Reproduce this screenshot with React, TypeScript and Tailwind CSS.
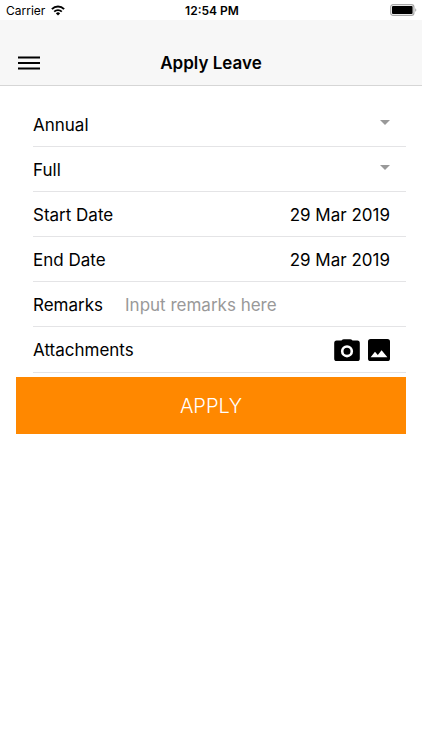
import { useState } from "react";

interface SelectRowProps {
  id: string;
  label: string;
  options: string[];
}

interface DateRowProps {
  id: string;
  label: string;
  initial: string;
}

const StatusBar = () => (
  <div className="grid h-5 grid-cols-3 items-center bg-white pr-1 pl-1.5 text-[12px] leading-4">
    <div className="flex items-center gap-1.5">
      <span className="pt-0.5">Carrier</span>
      <svg width="14" height="11" viewBox="0 0 14 11" fill="none" stroke="#000">
        <path d="M0.9 4.1a8.7 8.7 0 0 1 12.2 0" strokeWidth="2" />
        <path d="M3.2 6.6a5.4 5.4 0 0 1 7.6 0" strokeWidth="1.8" />
        <path d="M7 10.6L4.9 8.4a3 3 0 0 1 4.2 0z" fill="#000" stroke="none" />
      </svg>
    </div>
    <span className="pt-0.5 text-center font-semibold">12:54 PM</span>
    <svg
      className="justify-self-end"
      width="28"
      height="12"
      viewBox="0 0 28 12"
    >
      <rect
        x="0.7"
        y="0.7"
        width="23.2"
        height="10.6"
        rx="2.4"
        fill="#fff"
        stroke="#a8a8a8"
        strokeWidth="1.2"
      />
      <rect x="2" y="2" width="20.6" height="8" rx="1" fill="#000" />
      <path d="M25.2 4.2a2 2 0 0 1 0 3.6z" fill="#a8a8a8" />
    </svg>
  </div>
);

const SelectRow = ({ id, label, options }: SelectRowProps) => {
  const [value, setValue] = useState(options[0]);

  return (
    <div className="flex h-[45px] items-center border-b border-[#e4e4e6] pt-[3px] pr-4">
      <select
        id={id}
        aria-label={label}
        className="h-full min-w-0 flex-1 appearance-none bg-transparent outline-none"
        value={value}
        onChange={(e) => setValue(e.target.value)}
      >
        {options.map((option) => (
          <option key={option}>{option}</option>
        ))}
      </select>
      <svg
        className="pointer-events-none mb-1.5"
        width="10"
        height="5"
        viewBox="0 0 10 5"
        fill="#999"
      >
        <path d="M0 0h10L5 5z" />
      </svg>
    </div>
  );
};

const DateRow = ({ id, label, initial }: DateRowProps) => {
  const [value, setValue] = useState(initial);

  return (
    <div className="flex h-[45px] items-center border-b border-[#e4e4e6] pt-[3px] pr-4">
      <label htmlFor={id}>{label}</label>
      <input
        id={id}
        type="text"
        className="min-w-0 flex-1 bg-transparent text-right outline-none"
        value={value}
        onChange={(e) => setValue(e.target.value)}
      />
    </div>
  );
};

const App = () => {
  const [remarks, setRemarks] = useState("");

  return (
    <div className="min-h-screen bg-white font-['Inter',sans-serif] text-black">
      <StatusBar />
      <header className="grid grid-cols-[32px_1fr_32px] items-center border-b border-[#d6d6d6] bg-[#f7f7f7] px-4 pt-[21px]">
        <button
          type="button"
          aria-label="Menu"
          className="flex h-11 items-center pl-0.5"
        >
          <svg width="22" height="14" viewBox="0 0 22 14" fill="#000">
            <path d="M0 0.6h22v1.8H0zM0 6.1h22v1.8H0zM0 11.6h22v1.8H0z" />
          </svg>
        </button>
        <h1 className="pt-0.5 text-center text-[17px] font-semibold">
          Apply Leave
        </h1>
      </header>

      <form className="px-4 pt-4" onSubmit={(e) => e.preventDefault()}>
        <div className="pl-[17px] text-[17px]">
          <SelectRow
            id="leave-type"
            label="Leave type"
            options={["Annual", "Medical", "Unpaid"]}
          />
          <SelectRow id="duration" label="Duration" options={["Full", "Half"]} />
          <DateRow id="start-date" label="Start Date" initial="29 Mar 2019" />
          <DateRow id="end-date" label="End Date" initial="29 Mar 2019" />
          <div className="flex h-[45px] items-center gap-[22px] border-b border-[#e4e4e6] pt-[3px] pr-4">
            <label htmlFor="remarks">Remarks</label>
            <input
              id="remarks"
              type="text"
              className="min-w-0 flex-1 bg-transparent outline-none placeholder:text-[#999]"
              placeholder="Input remarks here"
              value={remarks}
              onChange={(e) => setRemarks(e.target.value)}
            />
          </div>
          <div className="flex h-[46px] items-center border-b border-[#e4e4e6] pr-4">
            <span className="flex-1 pt-0.5">Attachments</span>
            <div className="flex items-center gap-2">
              <button type="button" aria-label="Take photo">
                <svg width="26" height="22" viewBox="0 0 26 22">
                  <path
                    d="M8.2 0.8Q8.8 0.2 9.8 0.2h6.4q1 0 1.6 0.6l0.7 0.8H23.4Q25.8 1.6 25.8 4.2V19.4Q25.8 22 23.4 22H2.6Q0.2 22 0.2 19.4V4.2Q0.2 1.6 2.6 1.6H7.5z"
                    fill="#000"
                  />
                  <circle
                    cx="13"
                    cy="12.3"
                    r="4.8"
                    fill="none"
                    stroke="#fff"
                    strokeWidth="2.6"
                  />
                </svg>
              </button>
              <button type="button" aria-label="Choose picture">
                <svg width="22" height="22" viewBox="0 0 22 22">
                  <rect width="22" height="22" rx="2.6" fill="#000" />
                  <path
                    d="M2.6 18.2L7 12.8L9.8 16L13.6 11.2L19.4 18.2z"
                    fill="#fff"
                  />
                </svg>
              </button>
            </div>
          </div>
        </div>
        <button
          type="submit"
          className="mt-1 h-[57px] w-full bg-[#ff8800] text-xl font-light text-white"
        >
          APPLY
        </button>
      </form>
    </div>
  );
};

export default App;
